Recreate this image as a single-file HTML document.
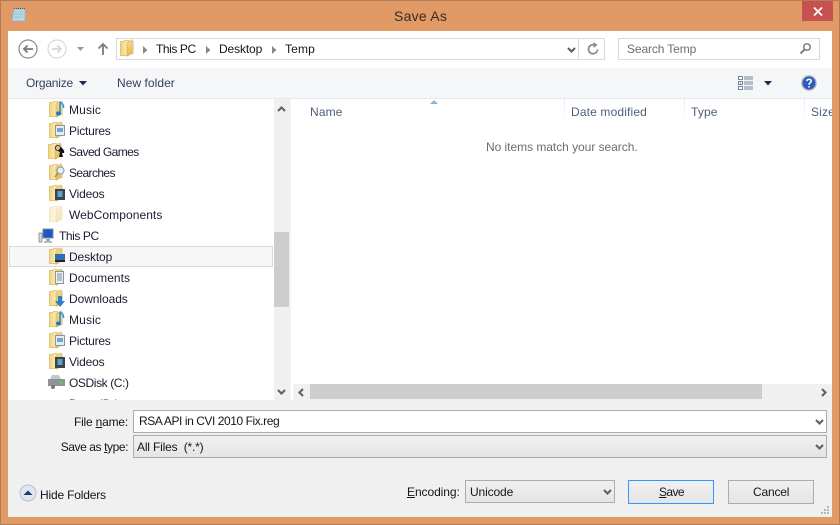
<!DOCTYPE html>
<html><head><meta charset="utf-8"><style>
html,body{margin:0;padding:0}
body{width:840px;height:525px;overflow:hidden;position:relative;background:#e19a66;font:12px "Liberation Sans",sans-serif;color:#14141f}
div,span.t,svg{position:absolute}
.t{white-space:nowrap;line-height:16px;letter-spacing:.15px}
.n{color:#1b1b30}
.h{color:#4c607a}
.fol{width:16px;height:18px}
.box{box-sizing:border-box;border:1px solid #d9d9d9;background:#fff}
.dd{box-sizing:border-box;border:1px solid #acacac}
.grad{background:linear-gradient(#f0f0f0,#e5e5e5)}
u{text-decoration:underline}
</style></head><body>
<svg width="0" height="0" style="position:absolute"><defs>
<linearGradient id="fg" x1="0" y1="0" x2="1" y2="0"><stop offset="0" stop-color="#f0d47e"/><stop offset="1" stop-color="#fdf0bd"/></linearGradient>
<linearGradient id="fl" x1="0" y1="0" x2="0" y2="1"><stop offset="0" stop-color="#f7dc87"/><stop offset="1" stop-color="#e4bb54"/></linearGradient>
<symbol id="f" viewBox="0 0 16 18"><path d="M12 2h1.500v13H12z" fill="#e7e2c6" stroke="#cfc497" stroke-width=".5"/><path d="M.5 2.500h3l1-1h4v15h-8z" fill="url(#fg)" stroke="#d8bb68" stroke-width=".8"/><path d="M7 4l5-3.200v13.700L7 17.200z" fill="url(#fl)" stroke="#d6ae4e" stroke-width=".6"/></symbol>
<symbol id="chev" viewBox="0 0 9 6"><path d="M1 1l3.500 3.500L8 1" fill="none" stroke="#606060" stroke-width="2.100"/></symbol>
</defs></svg>

<div style="left:0;top:0;width:840px;height:1px;background:#b07d57"></div>
<div style="left:0;top:0;width:1px;height:525px;background:#b07d57"></div>
<div style="right:0;top:0;width:1px;height:525px;background:#b07d57"></div>
<div style="left:0;bottom:0;width:840px;height:1px;background:#b07d57"></div>

<svg style="left:11px;top:7px" width="16" height="16" viewBox="0 0 16 16"><path d="M3 2h11v12H1z" fill="#b5dbe9" stroke="#8fb0bd" stroke-width=".7"/><path d="M3 1.500h11" stroke="#555" stroke-width="1" stroke-dasharray="1 1"/><path d="M3.500 5h9M3 7.500h9M2.800 10h9" stroke="#8fc0d2" stroke-width=".8"/></svg>
<span class="t" style="left:394px;top:8px;font-size:14px;color:#3a2a20;letter-spacing:.25px">Save As</span>
<div style="left:802px;top:1px;width:31px;height:20px;background:#c75050"></div>
<svg style="left:813px;top:7px" width="10" height="9" viewBox="0 0 10 9"><path d="M1 .5l8 8M9 .5l-8 8" stroke="#fff" stroke-width="1.800"/></svg>

<!-- client -->
<div style="left:8px;top:31px;width:824px;height:486px;background:#fff"></div>
<div style="left:8px;top:68px;width:824px;height:30px;background:#f5f6f7"></div>
<div style="left:8px;top:98px;width:824px;height:1px;background:#e6e8ec"></div>

<!-- nav buttons -->
<svg style="left:17px;top:38px" width="22" height="22" viewBox="0 0 22 22"><circle cx="11" cy="11" r="9" fill="#fff" stroke="#8a8a8a" stroke-width="1.200"/><path d="M16 11H7M10.500 7.500L7 11l3.500 3.500" fill="none" stroke="#7a7a7a" stroke-width="1.800"/></svg>
<svg style="left:46px;top:38px" width="22" height="22" viewBox="0 0 22 22"><circle cx="11" cy="11" r="9" fill="#fff" stroke="#d9d9d9" stroke-width="1.200"/><path d="M6 11h9M11.500 7.500L15 11l-3.500 3.500" fill="none" stroke="#d6d6d6" stroke-width="1.800"/></svg>
<svg style="left:76px;top:46px" width="9" height="6" viewBox="0 0 9 6"><path d="M1 1h7L4.500 5z" fill="#9a9a9a"/></svg>
<svg style="left:97px;top:42px" width="12" height="14" viewBox="0 0 12 14"><path d="M6 13V2M1.500 6.500L6 2l4.500 4.500" fill="none" stroke="#808080" stroke-width="1.900"/></svg>

<!-- address -->
<div class="box" style="left:116px;top:38px;width:463px;height:22px"></div>
<div class="box" style="left:579px;top:38px;width:27px;height:22px;margin-left:-1px"></div>
<svg class="fol" style="left:120px;top:39px"><use href="#f"/></svg>
<svg style="left:143px;top:46px" width="5" height="8"><path d="M0 0l4.500 4L0 8z" fill="#8a8a8a"/></svg>
<span class="t" style="left:156px;top:41px;letter-spacing:-.42px">This PC</span>
<svg style="left:206px;top:46px" width="5" height="8"><path d="M0 0l4.500 4L0 8z" fill="#8a8a8a"/></svg>
<span class="t" style="left:219px;top:41px;letter-spacing:-.13px">Desktop</span>
<svg style="left:272px;top:46px" width="5" height="8"><path d="M0 0l4.500 4L0 8z" fill="#8a8a8a"/></svg>
<span class="t" style="left:285px;top:41px">Temp</span>
<svg style="left:567px;top:47px;width:9px;height:6px"><use href="#chev" width="9" height="6"/></svg>
<svg style="left:586px;top:42px" width="14" height="14" viewBox="0 0 14 14"><path d="M11.500 7.500A4.500 4.500 0 1 1 8.500 3" fill="none" stroke="#8a8a8a" stroke-width="1.700"/><path d="M7.500 0l4 3-4 3z" fill="#8a8a8a"/></svg>

<!-- search -->
<div class="box" style="left:618px;top:38px;width:202px;height:22px"></div>
<span class="t" style="left:627px;top:41px;color:#6d6d6d;letter-spacing:-.12px">Search Temp</span>
<svg style="left:799px;top:42px" width="13" height="13" viewBox="0 0 13 13"><circle cx="8" cy="5" r="3.300" fill="none" stroke="#808080" stroke-width="1.500"/><path d="M5.500 7.500L1.500 11.500" stroke="#808080" stroke-width="2"/></svg>

<!-- toolbar -->
<span class="t" style="left:26px;top:75px;color:#33405f;letter-spacing:-.22px">Organize</span>
<svg style="left:79px;top:81px" width="8" height="5"><path d="M0 0h8L4 4.500z" fill="#1e2f55"/></svg>
<span class="t" style="left:117px;top:75px;color:#33405f;letter-spacing:.05px">New folder</span>
<svg style="left:738px;top:76px" width="16" height="14" viewBox="0 0 16 14"><path d="M.5.500h4v3h-4zM.5 5.500h4v3h-4zM.5 10.500h4v3h-4z" fill="#fff" stroke="#6d87a8"/><path d="M2 7h1" stroke="#d33" stroke-width="1"/><path d="M6 1h9M6 3h9M6 6h9M6 8h9M6 11h9M6 13h9" stroke="#7b8794" stroke-width=".9"/></svg>
<svg style="left:764px;top:81px" width="8" height="5"><path d="M0 0h8L4 4.500z" fill="#1e2f55"/></svg>
<svg style="left:801px;top:75px" width="16" height="16" viewBox="0 0 16 16"><circle cx="8" cy="8" r="7" fill="#2a5bc0" stroke="#a8a8a8" stroke-width="1.300"/><path d="M5.800 6.200C6 3.800 10.300 3.800 10.300 6c0 1.700-2.300 1.800-2.300 3.700" fill="none" stroke="#fff" stroke-width="1.500"/><path d="M7.200 11h1.600v1.500H7.200z" fill="#fff"/></svg>

<!-- tree -->
<svg class="fol" style="left:49px;top:100px"><use href="#f"/></svg><svg style="left:56px;top:101px" width="9" height="16" viewBox="0 0 9 16"><path d="M4 1v11" stroke="#2c8fd8" stroke-width="1.500"/><path d="M4 1c2 1 4 3 3.500 6" fill="none" stroke="#2c8fd8" stroke-width="1.500"/><ellipse cx="2.500" cy="12.500" rx="2.500" ry="2" fill="#1f78c8"/></svg>
<span class="t n" style="left:69px;top:102px">Music</span>
<svg class="fol" style="left:49px;top:121px"><use href="#f"/></svg><svg style="left:55px;top:125px" width="10" height="11"><rect x=".5" y=".5" width="9" height="10" fill="#e4edf1" stroke="#8b979f"/><rect x="2" y="3" width="6" height="4" fill="#6fa9c5"/></svg>
<span class="t n" style="left:69px;top:123px;letter-spacing:-.22px">Pictures</span>
<svg class="fol" style="left:48px;top:142px"><use href="#f"/></svg><svg style="left:55px;top:145px" width="10" height="14" viewBox="0 0 10 14"><circle cx="3" cy="3" r="2.500" fill="#d8c8a0" stroke="#333"/><path d="M6 2c2 2 4 4 3 6H7l1 4H4l1-5-2-1z" fill="#111"/></svg>
<span class="t n" style="left:69px;top:144px;letter-spacing:-.58px">Saved Games</span>
<svg class="fol" style="left:49px;top:163px"><use href="#f"/></svg><svg style="left:54px;top:166px" width="11" height="12" viewBox="0 0 11 12"><circle cx="6.500" cy="4.500" r="3.500" fill="#e8eef2" stroke="#8a9aa6"/><path d="M4 7L1 11" stroke="#a08c60" stroke-width="1.500"/></svg>
<span class="t n" style="left:69px;top:165px;letter-spacing:-.6px">Searches</span>
<svg class="fol" style="left:49px;top:184px"><use href="#f"/></svg><svg style="left:55px;top:189px" width="10" height="11"><rect width="10" height="11" fill="#39454f"/><rect x="2.500" y="2" width="5" height="6" fill="#5fa0c8"/></svg>
<span class="t n" style="left:69px;top:186px;letter-spacing:-.18px">Videos</span>
<svg class="fol" style="left:49px;top:205px;opacity:.4"><use href="#f"/></svg>
<span class="t n" style="left:69px;top:207px;letter-spacing:.07px">WebComponents</span>
<svg style="left:38px;top:228px" width="16" height="16" viewBox="0 0 16 16"><rect x="5" y="1" width="10" height="9" fill="#1b57c4" stroke="#7b8a96"/><path d="M8 11h4v2H8z" fill="#9aa5ad"/><path d="M6 14h8" stroke="#9aa5ad" stroke-width="1.500"/><rect x="1" y="5" width="3" height="9" fill="#d8dde0" stroke="#6e7a80" stroke-width=".7"/></svg>
<span class="t n" style="left:59px;top:228px;letter-spacing:-.42px">This PC</span>
<div style="left:9px;top:246px;width:264px;height:21px;box-sizing:border-box;border:1px solid #d9d9d9;background:#f7f7f7"></div>
<svg class="fol" style="left:49px;top:247px"><use href="#f"/></svg><svg style="left:55px;top:254px" width="10" height="9"><rect width="10" height="6" fill="#2a6fb5"/><rect y="6" width="10" height="2" fill="#223"/></svg>
<span class="t n" style="left:69px;top:249px;letter-spacing:-.13px">Desktop</span>
<svg class="fol" style="left:49px;top:268px"><use href="#f"/></svg><svg style="left:55px;top:271px" width="9" height="13"><rect x=".5" y=".5" width="8" height="12" fill="#eef1f3" stroke="#8b979f"/><path d="M2 3h5M2 5h5M2 7h5M2 9h5" stroke="#7a8fa0"/></svg>
<span class="t n" style="left:69px;top:270px;letter-spacing:.04px">Documents</span>
<svg class="fol" style="left:49px;top:289px"><use href="#f"/></svg><svg style="left:55px;top:296px" width="10" height="11"><path d="M3 0h4v5h3l-5 6-5-6h3z" fill="#2c80d0"/></svg>
<span class="t n" style="left:69px;top:291px;letter-spacing:-.07px">Downloads</span>
<svg class="fol" style="left:49px;top:310px"><use href="#f"/></svg><svg style="left:56px;top:311px" width="9" height="16" viewBox="0 0 9 16"><path d="M4 1v11" stroke="#2c8fd8" stroke-width="1.500"/><path d="M4 1c2 1 4 3 3.500 6" fill="none" stroke="#2c8fd8" stroke-width="1.500"/><ellipse cx="2.500" cy="12.500" rx="2.500" ry="2" fill="#1f78c8"/></svg>
<span class="t n" style="left:69px;top:312px">Music</span>
<svg class="fol" style="left:49px;top:331px"><use href="#f"/></svg><svg style="left:55px;top:335px" width="10" height="11"><rect x=".5" y=".5" width="9" height="10" fill="#e4edf1" stroke="#8b979f"/><rect x="2" y="3" width="6" height="4" fill="#6fa9c5"/></svg>
<span class="t n" style="left:69px;top:333px;letter-spacing:-.22px">Pictures</span>
<svg class="fol" style="left:49px;top:352px"><use href="#f"/></svg><svg style="left:55px;top:357px" width="10" height="11"><rect width="10" height="11" fill="#39454f"/><rect x="2.500" y="2" width="5" height="6" fill="#5fa0c8"/></svg>
<span class="t n" style="left:69px;top:354px;letter-spacing:-.18px">Videos</span>
<svg style="left:48px;top:374px" width="17" height="16" viewBox="0 0 17 16"><rect x="0" y="5" width="17" height="7" fill="#8d9498"/><path d="M2 5l2-4h7l2 4z" fill="#c2c7ca"/><rect x="11" y="7" width="4" height="3" fill="#5fc05f"/><circle cx="5" cy="13" r="2" fill="#777"/></svg>
<span class="t n" style="left:69px;top:375px;letter-spacing:-.4px">OSDisk (C:)</span>
<span class="t n" style="left:69px;top:396px">Data (D:)</span>

<!-- tree scrollbar -->
<div style="left:274px;top:99px;width:16px;height:301px;background:#f0f0f0"></div>
<div style="left:274px;top:232px;width:15px;height:75px;background:#cdcdcd"></div>
<svg style="left:277px;top:106px" width="9" height="6"><path d="M1 5l3.500-3.500L8 5" fill="none" stroke="#606060" stroke-width="2.100"/></svg>
<svg style="left:277px;top:389px;width:9px;height:6px"><use href="#chev" width="9" height="6"/></svg>
<div style="left:290px;top:99px;width:1px;height:301px;background:#f2f4f7"></div>

<!-- list headers -->
<span class="t h" style="left:310px;top:104px">Name</span>
<svg style="left:430px;top:100px" width="8" height="4"><path d="M0 4l4-4 4 4z" fill="#8fb5d2"/></svg>
<div style="left:564px;top:99px;width:1px;height:22px;background:linear-gradient(#dfeaf5,#fff)"></div>
<span class="t h" style="left:571px;top:104px">Date modified</span>
<div style="left:684px;top:99px;width:1px;height:22px;background:linear-gradient(#dfeaf5,#fff)"></div>
<span class="t h" style="left:691px;top:104px">Type</span>
<div style="left:804px;top:99px;width:1px;height:22px;background:linear-gradient(#dfeaf5,#fff)"></div>
<span class="t h" style="left:811px;top:104px;width:21px;overflow:hidden;display:block">Size</span>
<span class="t" style="left:486px;top:139px;color:#6d6d6d;letter-spacing:-.04px">No items match your search.</span>

<!-- h scrollbar -->
<div style="left:293px;top:384px;width:539px;height:16px;background:#f0f0f0"></div>
<div style="left:310px;top:384px;width:452px;height:15px;background:#cdcdcd"></div>
<svg style="left:298px;top:388px" width="6" height="9"><path d="M5 1L1.500 4.500 5 8" fill="none" stroke="#606060" stroke-width="2.100"/></svg>
<svg style="left:821px;top:388px" width="6" height="9"><path d="M1 1l3.500 3.500L1 8" fill="none" stroke="#606060" stroke-width="2.100"/></svg>

<!-- bottom panel -->
<div style="left:8px;top:400px;width:824px;height:117px;background:#f0f0f0"></div>
<span class="t" style="right:712px;top:414px;letter-spacing:-.2px">File <u>n</u>ame:</span>
<div class="dd" style="left:133px;top:410px;width:694px;height:23px;background:#fff"></div>
<span class="t" style="left:139px;top:413px;letter-spacing:-.44px">RSA API in CVI 2010 Fix.reg</span>
<svg style="left:815px;top:419px;width:9px;height:6px"><use href="#chev" width="9" height="6"/></svg>
<span class="t" style="right:712px;top:439px;letter-spacing:-.42px">Save as <u>t</u>ype:</span>
<div class="dd grad" style="left:133px;top:435px;width:694px;height:23px"></div>
<span class="t" style="left:137px;top:439px;white-space:pre;letter-spacing:-.18px">All Files  (*.*)</span>
<svg style="left:815px;top:444px;width:9px;height:6px"><use href="#chev" width="9" height="6"/></svg>

<svg style="left:19px;top:484px" width="18" height="18" viewBox="0 0 18 18"><circle cx="9" cy="9" r="8" fill="#dfe6f0" stroke="#b6bfcc"/><path d="M4.500 11L9 6.500l4.500 4.500z" fill="#24386a"/></svg>
<span class="t" style="left:40px;top:487px;letter-spacing:-.18px">Hide Folders</span>

<span class="t" style="left:407px;top:484px;letter-spacing:-.07px"><u>E</u>ncoding:</span>
<div class="dd grad" style="left:465px;top:480px;width:150px;height:23px"></div>
<span class="t" style="left:470px;top:484px;letter-spacing:-.13px">Unicode</span>
<svg style="left:603px;top:489px;width:9px;height:6px"><use href="#chev" width="9" height="6"/></svg>

<div class="grad" style="left:628px;top:480px;width:86px;height:24px;box-sizing:border-box;border:1px solid #3399ff"></div>
<span class="t" style="left:659px;top:484px;letter-spacing:-.6px"><u>S</u>ave</span>
<div class="grad dd" style="left:728px;top:480px;width:86px;height:24px"></div>
<span class="t" style="left:753px;top:484px;letter-spacing:-.18px">Cancel</span>
<svg style="left:820px;top:505px" width="10" height="10"><path d="M7 1h2v2H7zM4 4h2v2H4zM7 4h2v2H7zM1 7h2v2H1zM4 7h2v2H4zM7 7h2v2H7z" fill="#b8b8b8"/></svg>
</body></html>
